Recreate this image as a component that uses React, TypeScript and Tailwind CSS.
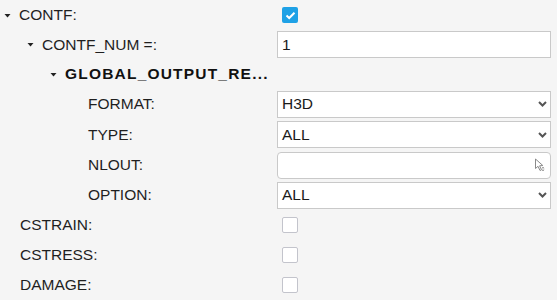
import React from "react";

const font = { fontFamily: '"Liberation Sans", Arial, sans-serif' };

function Tri() {
  return (
    <svg width="7" height="5" viewBox="0 0 7 5" className="mr-[8px] shrink-0">
      <path d="M0.5 1 L6.5 1 L3.5 4.5 Z" fill="#222" />
    </svg>
  );
}

function Chevron() {
  return (
    <svg width="9" height="7" viewBox="0 0 9 7" className="absolute right-[3px] top-1/2 -translate-y-1/2">
      <path d="M1 1.5 L4.5 5 L8 1.5" stroke="#555" strokeWidth="2" fill="none" />
    </svg>
  );
}

function Cursor() {
  return (
    <svg width="12" height="14" viewBox="0 0 12 14" className="absolute right-[4px] top-1/2 -translate-y-1/2">
      <path d="M1.5 1 L1.5 10.5 L4 8.3 L6 12.5 L7.5 11.8 L5.6 7.8 L8.8 7.5 Z" stroke="#8a8a8a" strokeWidth="1" fill="#fff" strokeLinejoin="round" />
      <path d="M9 9 L9 13 M7.8 10.2 L9 9 L10.2 10.2 M7.8 11.8 L9 13 L10.2 11.8" stroke="#9a9a9a" strokeWidth="0.8" fill="none" />
    </svg>
  );
}

function Check({ checked }: { checked?: boolean }) {
  if (checked) {
    return (
      <div className="ml-[5px] w-[16px] h-[16px] rounded-[2px] bg-[#1ea1e6] flex items-center justify-center">
        <svg width="11" height="9" viewBox="0 0 11 9">
          <path d="M1.5 4.5 L4.2 7 L9.5 1.8" stroke="#fff" strokeWidth="2" fill="none" />
        </svg>
      </div>
    );
  }
  return <div className="ml-[5px] w-[16px] h-[16px] rounded-[2px] bg-white border-[1.5px] border-[#c3c4cc]" />;
}

function Field({ value, kind }: { value?: string; kind: "text" | "select" | "pick" }) {
  return (
    <div
      className={
        "relative w-[274px] h-[27px] bg-white border-[1.5px] border-[#c9c9c9] flex items-center pl-[4px] text-[15.5px] text-[#1a1a1a] " +
        (kind === "pick" ? "rounded-[4px]" : "")
      }
    >
      {value}
      {kind === "select" && <Chevron />}
      {kind === "pick" && <Cursor />}
    </div>
  );
}

function Row({
  h,
  indent,
  label,
  tri,
  bold,
  children,
}: {
  h: string;
  indent: string;
  label: string;
  tri?: boolean;
  bold?: boolean;
  children?: React.ReactNode;
}) {
  return (
    <div className={"flex items-center " + h}>
      <div className={"w-[277px] shrink-0 flex items-center " + indent}>
        {tri && <Tri />}
        <span
          className={
            "text-[15.5px] text-[#1f1f1f] whitespace-nowrap " + (bold ? "font-bold tracking-[1.2px] text-[#111]" : "")
          }
        >
          {label}
        </span>
      </div>
      {children}
    </div>
  );
}

export default function App() {
  return (
    <div className="w-[557px] h-[300px] bg-[#f5f5f5] overflow-hidden" style={font}>
      <Row h="h-[30px]" indent="pl-[4px]" label="CONTF:" tri>
        <Check checked />
      </Row>
      <Row h="h-[29px]" indent="pl-[27px]" label="CONTF_NUM =:" tri>
        <Field kind="text" value="1" />
      </Row>
      <Row h="h-[30px]" indent="pl-[50px]" label="GLOBAL_OUTPUT_RE..." tri bold />
      <Row h="h-[30px]" indent="pl-[88px]" label="FORMAT:">
        <Field kind="select" value="H3D" />
      </Row>
      <Row h="h-[31px]" indent="pl-[88px]" label="TYPE:">
        <Field kind="select" value="ALL" />
      </Row>
      <Row h="h-[30px]" indent="pl-[88px]" label="NLOUT:">
        <Field kind="pick" />
      </Row>
      <Row h="h-[30px]" indent="pl-[88px]" label="OPTION:">
        <Field kind="select" value="ALL" />
      </Row>
      <Row h="h-[30px]" indent="pl-[20px]" label="CSTRAIN:">
        <Check />
      </Row>
      <Row h="h-[30px]" indent="pl-[20px]" label="CSTRESS:">
        <Check />
      </Row>
      <Row h="h-[30px]" indent="pl-[20px]" label="DAMAGE:">
        <Check />
      </Row>
    </div>
  );
}
